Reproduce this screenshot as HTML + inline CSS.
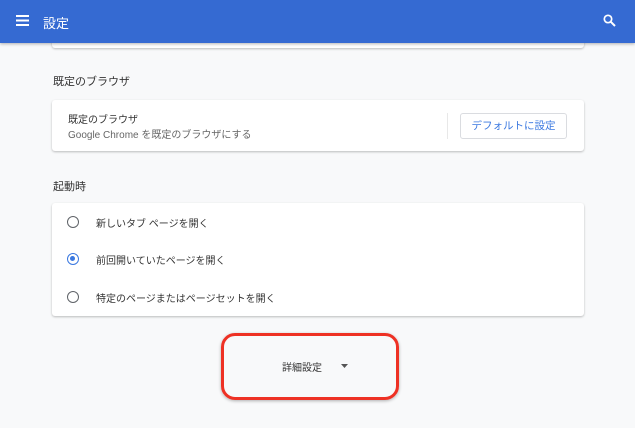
<!DOCTYPE html>
<html><head><meta charset="utf-8"><style>
*{margin:0;padding:0;box-sizing:border-box}
body{width:635px;height:428px;overflow:hidden;background:#f8f9fa;font-family:"Liberation Sans","Noto Sans CJK JP",sans-serif;color:#333;position:relative}
.hdr{position:absolute;left:0;top:0;width:635px;height:43px;background:#356ad2;box-shadow:0 1px 3px rgba(0,0,0,.3);z-index:2}
.hdr .t{position:absolute;left:43px;top:13px;color:#fff;font-size:13px}
.card{position:absolute;left:52px;width:532px;background:#fff;border-radius:3px;box-shadow:0 1px 2px rgba(0,0,0,.25)}
.sec{position:absolute;left:53px;font-size:11px;color:#333}
.btn{position:absolute;left:408px;top:13px;width:107px;height:26px;border:1px solid #dadce0;border-radius:3px;color:#3a78e0;font-size:10.5px;text-align:center;line-height:24px}
.row{position:absolute;left:0;height:20px;font-size:10px;color:#333}
.rad{position:absolute;left:15px;top:4px;width:12px;height:12px;border:1.6px solid #5f6368;border-radius:50%}
.rad.on{border-color:#3a78e0}
.rad.on:after{content:"";position:absolute;left:2px;top:2px;width:5px;height:5px;border-radius:50%;background:#3a78e0}
.lbl{position:absolute;left:44px;top:3px;white-space:nowrap}
</style></head><body>
<div class="hdr">
<svg style="position:absolute;left:16px;top:15px" width="13" height="11"><rect y="0" width="13" height="2" fill="#fff"/><rect y="4.5" width="13" height="2" fill="#fff"/><rect y="9" width="13" height="2" fill="#fff"/></svg>
<div class="t">設定</div>
<svg style="position:absolute;left:603px;top:14px" width="13" height="13"><circle cx="5" cy="5" r="3.7" stroke="#fff" stroke-width="1.7" fill="none"/><path d="M7.8 7.8L12 12" stroke="#fff" stroke-width="2"/></svg>
</div>
<div class="card" style="top:30px;height:18px"></div>
<div class="sec" style="top:73px">既定のブラウザ</div>
<div class="card" style="top:100px;height:51px">
<div style="position:absolute;left:16px;top:11px;font-size:10px;color:#333">既定のブラウザ</div>
<div style="position:absolute;left:16px;top:26px;font-size:10px;color:#666">Google Chrome を既定のブラウザにする</div>
<div style="position:absolute;left:395px;top:13px;width:1px;height:26px;background:#e8e8e8"></div>
<div class="btn">デフォルトに設定</div>
</div>
<div class="sec" style="top:178px">起動時</div>
<div class="card" style="top:203px;height:113px">
<div class="row" style="top:9px"><div class="rad"></div><div class="lbl">新しいタブ ページを開く</div></div>
<div class="row" style="top:46px"><div class="rad on"></div><div class="lbl">前回開いていたページを開く</div></div>
<div class="row" style="top:84px"><div class="rad"></div><div class="lbl">特定のページまたはページセットを開く</div></div>
</div>
<div style="position:absolute;left:282px;top:359px;font-size:10px;color:#333">詳細設定</div>
<svg style="position:absolute;left:341px;top:364px" width="7" height="4"><path d="M0 0L7 0L3.5 4Z" fill="#555"/></svg>
<div style="position:absolute;left:221px;top:333px;width:178px;height:67px;border:3px solid #ee3124;border-radius:14px;box-shadow:0 1px 3px rgba(0,0,0,.3)"></div>
</body></html>
